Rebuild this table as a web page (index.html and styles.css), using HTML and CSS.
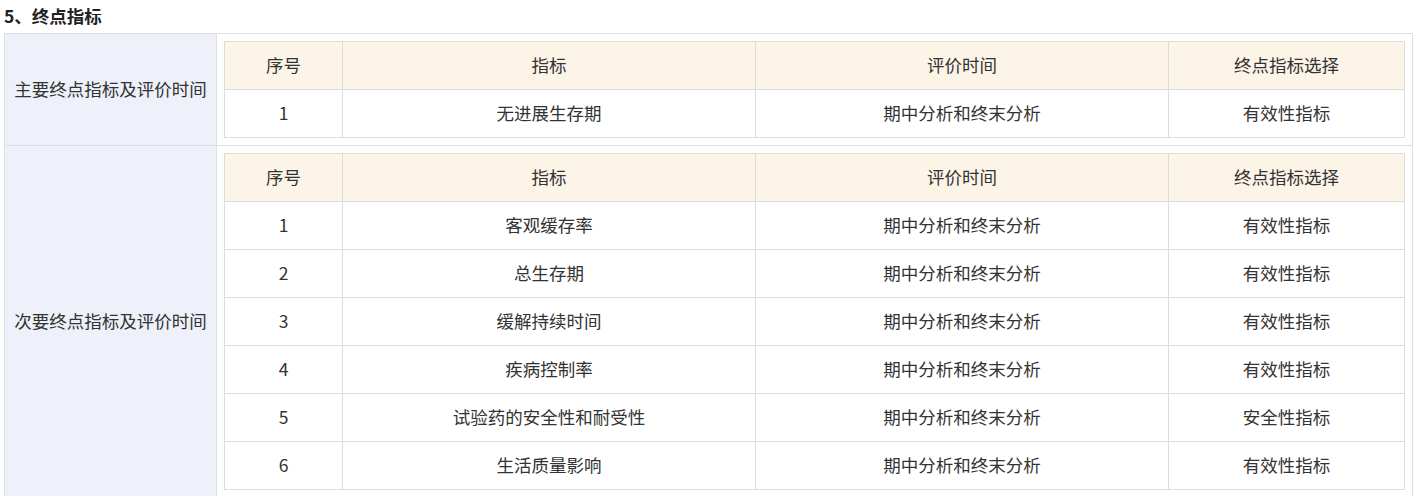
FILE: index.html
```html
<!DOCTYPE html>
<html lang="zh">
<head>
<meta charset="utf-8">
<link rel="stylesheet" href="styles.css">
</head>
<body>
<h3 class="title">5、终点指标</h3>
<table class="outer">
  <tr>
    <th class="label">主要终点指标及评价时间</th>
    <td class="content">
      <table class="inner">
        <colgroup><col class="c1"><col class="c2"><col class="c3"><col class="c4"></colgroup>
        <tr class="head"><td>序号</td><td>指标</td><td>评价时间</td><td>终点指标选择</td></tr>
        <tr><td>1</td><td>无进展生存期</td><td>期中分析和终末分析</td><td>有效性指标</td></tr>
      </table>
    </td>
  </tr>
  <tr>
    <th class="label">次要终点指标及评价时间</th>
    <td class="content">
      <table class="inner">
        <colgroup><col class="c1"><col class="c2"><col class="c3"><col class="c4"></colgroup>
        <tr class="head"><td>序号</td><td>指标</td><td>评价时间</td><td>终点指标选择</td></tr>
        <tr><td>1</td><td>客观缓存率</td><td>期中分析和终末分析</td><td>有效性指标</td></tr>
        <tr><td>2</td><td>总生存期</td><td>期中分析和终末分析</td><td>有效性指标</td></tr>
        <tr><td>3</td><td>缓解持续时间</td><td>期中分析和终末分析</td><td>有效性指标</td></tr>
        <tr><td>4</td><td>疾病控制率</td><td>期中分析和终末分析</td><td>有效性指标</td></tr>
        <tr><td>5</td><td>试验药的安全性和耐受性</td><td>期中分析和终末分析</td><td>安全性指标</td></tr>
        <tr><td>6</td><td>生活质量影响</td><td>期中分析和终末分析</td><td>有效性指标</td></tr>
      </table>
    </td>
  </tr>
</table>
</body>
</html>
```
FILE: styles.css
```css
html, body {
  margin: 0;
  padding: 0;
  background: #fff;
}
body {
  padding: 0 0 0 4px;
  font-family: "Noto Sans CJK SC", "Microsoft YaHei", sans-serif;
  color: #333;
  font-size: 17.5px;
}
.title {
  margin: 0;
  height: 33px;
  line-height: 31px;
  font-size: 17.5px;
  font-weight: bold;
  color: #222;
}
.outer {
  border-collapse: collapse;
  width: 1409px;
  table-layout: fixed;
}
.outer > tbody > tr > th,
.outer > tbody > tr > td {
  border: 1px solid #e0e0e0;
}
.label {
  width: 211px;
  background: #eef1f9;
  font-weight: normal;
  text-align: center;
  vertical-align: middle;
  padding: 0 0 2px;
  color: #333;
}
.content {
  padding: 7px;
}
.inner {
  border-collapse: collapse;
  width: 100%;
  table-layout: fixed;
}
.inner .c1 { width: 10%; }
.inner .c2 { width: 35%; }
.inner .c3 { width: 35%; }
.inner .c4 { width: 20%; }
.inner td {
  border: 1px solid #dcdcdc;
  height: 45px;
  padding: 0 0 2px;
  text-align: center;
  vertical-align: middle;
  line-height: 20px;
}
.inner .head td {
  background: #fdf4e8;
}
```
